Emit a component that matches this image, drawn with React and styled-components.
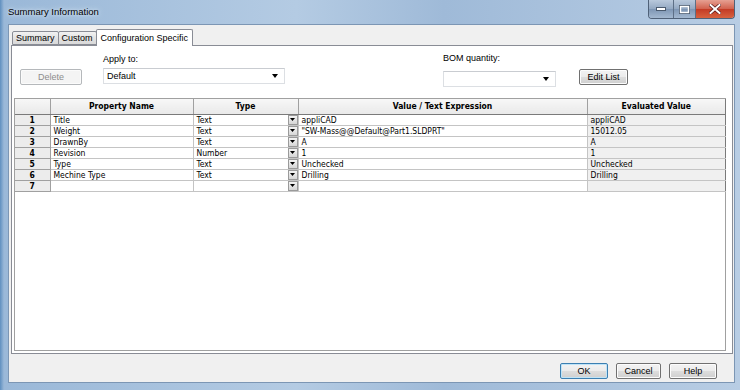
import React from "react";
import styled, { createGlobalStyle } from "styled-components";

const GlobalStyle = createGlobalStyle`
  * { box-sizing: border-box; }
  html, body { margin: 0; padding: 0; background: #ffffff; }
  body { font-family: "Liberation Sans", Arial, sans-serif; }
`;

const rows = [
  { name: "Title", type: "Text", value: "appliCAD", evaluated: "appliCAD" },
  { name: "Weight", type: "Text", value: "\"SW-Mass@@Default@Part1.SLDPRT\"", evaluated: "15012.05" },
  { name: "DrawnBy", type: "Text", value: "A", evaluated: "A" },
  { name: "Revision", type: "Number", value: "1", evaluated: "1" },
  { name: "Type", type: "Text", value: "Unchecked", evaluated: "Unchecked" },
  { name: "Mechine Type", type: "Text", value: "Drilling", evaluated: "Drilling" },
  { name: "", type: "", value: "", evaluated: "" },
];

const App = () => {
  return (
    <>
      <GlobalStyle />
      <Window>
        <TitleBar>
          <Title>Summary Information</Title>
          <CaptionGroup>
            <CaptionButton $w={25}>
              <svg width="10" height="4" viewBox="0 0 10 4">
                <rect x="0.5" y="0.5" width="9" height="3" fill="#fff" stroke="#4a5a6e" strokeWidth="1" />
              </svg>
            </CaptionButton>
            <CaptionButton $w={22}>
              <svg width="11" height="9" viewBox="0 0 11 9">
                <rect x="0.5" y="0.5" width="10" height="8" fill="none" stroke="#4a5a6e" strokeWidth="1" />
                <rect x="1.5" y="1.5" width="8" height="6" fill="none" stroke="#fff" strokeWidth="1.4" />
              </svg>
            </CaptionButton>
            <CloseButton>
              <svg width="12" height="10" viewBox="0 0 12 10">
                <path d="M1.5 1 L10.5 9 M10.5 1 L1.5 9" stroke="#5a1d1d" strokeWidth="3.4" strokeLinecap="square" />
                <path d="M1.5 1 L10.5 9 M10.5 1 L1.5 9" stroke="#fff" strokeWidth="2" strokeLinecap="square" />
              </svg>
            </CloseButton>
          </CaptionGroup>
        </TitleBar>

        <Client>
          <TabStrip>
            <Tab>Summary</Tab>
            <Tab>Custom</Tab>
            <Tab $active>Configuration Specific</Tab>
          </TabStrip>

          <Panel>
            <Controls>
              <DialogButton $w={62} $top={23} disabled>Delete</DialogButton>
              <Field $left={21} $top={7} $gap={3}>
                <Label>Apply to:</Label>
                <Combo $w={182}>
                  <span>Default</span>
                  <Arrow />
                </Combo>
              </Field>
              <Field $left={158} $top={6} $gap={7}>
                <Label>BOM quantity:</Label>
                <Combo $w={113}>
                  <span></span>
                  <Arrow />
                </Combo>
              </Field>
              <DialogButton $w={49} $top={23} $left={23}>Edit List</DialogButton>
            </Controls>

            <GridBox>
              <Table>
                <colgroup>
                  <col style={{ width: 35 }} />
                  <col style={{ width: 143 }} />
                  <col style={{ width: 105 }} />
                  <col style={{ width: 289 }} />
                  <col />
                </colgroup>
                <thead>
                  <tr>
                    <HeadCell />
                    <HeadCell>Property Name</HeadCell>
                    <HeadCell>Type</HeadCell>
                    <HeadCell>Value / Text Expression</HeadCell>
                    <HeadCell>Evaluated Value</HeadCell>
                  </tr>
                </thead>
                <tbody>
                  {rows.map((r, i) => (
                    <tr key={i}>
                      <RowHead>{i + 1}</RowHead>
                      <Cell>{r.name}</Cell>
                      <TypeCell>
                        <TypeInner>
                          <span>{r.type}</span>
                          <DropButton>
                            <svg width="5" height="3" viewBox="0 0 5 3">
                              <path d="M0 0 H5 L2.5 3 Z" fill="#000" />
                            </svg>
                          </DropButton>
                        </TypeInner>
                      </TypeCell>
                      <Cell>{r.value}</Cell>
                      <Cell $readonly>{r.evaluated}</Cell>
                    </tr>
                  ))}
                </tbody>
              </Table>
            </GridBox>
          </Panel>

          <Footer>
            <DialogButton $w={48} $default>OK</DialogButton>
            <DialogButton $w={45}>Cancel</DialogButton>
            <DialogButton $w={48}>Help</DialogButton>
          </Footer>
        </Client>
      </Window>
    </>
  );
};

export default App;

const Window = styled.div`
  width: 740px;
  height: 390px;
  display: flex;
  flex-direction: column;
  background: linear-gradient(90deg, #5f8fbf 0px, #9ab8d8 4px, #b4cbe3 40%, #9fbad8 60%, #b8cde4 100%);
  padding: 0 5px 7px 8px;
`;

const TitleBar = styled.div`
  height: 24px;
  display: flex;
  align-items: flex-start;
  margin-right: -5px;
`;

const Title = styled.div`
  font-size: 9.5px;
  color: #000;
  padding-top: 6px;
  text-shadow: 0 0 6px #dbe7f3, 0 0 3px #dbe7f3;
`;

const CaptionGroup = styled.div`
  margin-left: auto;
  margin-right: 5px;
  display: flex;
  height: 19px;
  border: 1px solid #4f6178;
  border-top: none;
  border-radius: 0 0 4px 4px;
  overflow: hidden;
`;

const CaptionButton = styled.div`
  width: ${(p) => p.$w}px;
  height: 100%;
  display: flex;
  align-items: center;
  justify-content: center;
  background: linear-gradient(#b9c9dc, #93a8c2 50%, #7e96b4 51%, #a3b8d0);
  border-right: 1px solid #5d6f86;
`;

const CloseButton = styled.div`
  width: 38px;
  height: 100%;
  display: flex;
  align-items: center;
  justify-content: center;
  background: linear-gradient(#e6a092, #d1604c 50%, #c33b25 51%, #d8623f);
`;

const Client = styled.div`
  flex: 1;
  display: flex;
  flex-direction: column;
  background: #f0f0f0;
  border: 1px solid #7c96b4;
`;

const TabStrip = styled.div`
  display: flex;
  align-items: flex-end;
  height: 20px;
  padding-left: 3px;
  position: relative;
  z-index: 1;
`;

const Tab = styled.div`
  height: ${(p) => (p.$active ? 17 : 14)}px;
  margin-bottom: ${(p) => (p.$active ? -1 : 0)}px;
  padding: 0 ${(p) => (p.$active ? 4 : 3)}px;
  display: flex;
  align-items: center;
  font-size: 9px;
  color: #000;
  border: 1px solid #898c95;
  border-bottom: ${(p) => (p.$active ? "none" : "1px solid #898c95")};
  margin-right: -1px;
  background: ${(p) => (p.$active ? "#ffffff" : "linear-gradient(#f2f2f2, #e3e3e3 50%, #d9d9d9)")};
  border-radius: 2px 2px 0 0;
`;

const Panel = styled.div`
  height: 309px;
  margin: 0 1px 0 2px;
  background: #ffffff;
  border: 1px solid #898c95;
  padding: 0 6px 0 2px;
  display: flex;
  flex-direction: column;
`;

const Controls = styled.div`
  height: 52px;
  display: flex;
  align-items: flex-start;
  padding-left: 6px;
`;

const Field = styled.div`
  display: flex;
  flex-direction: column;
  gap: ${(p) => p.$gap}px;
  margin-left: ${(p) => p.$left}px;
  margin-top: ${(p) => p.$top}px;
`;

const Label = styled.div`
  font-size: 9px;
  line-height: 12px;
  color: #000;
`;

const Combo = styled.div`
  width: ${(p) => p.$w}px;
  height: 16px;
  border: 1px solid #dcdfe3;
  border-top-color: #c9ccd1;
  background: #fff;
  display: flex;
  align-items: center;
  justify-content: space-between;
  padding: 0 6px 0 3px;
  font-size: 9px;
  color: #000;
`;

const Arrow = styled.span`
  width: 0;
  height: 0;
  border-left: 3.5px solid transparent;
  border-right: 3.5px solid transparent;
  border-top: 4px solid #000;
`;

const DialogButton = styled.button`
  width: ${(p) => p.$w}px;
  height: 16px;
  margin-top: ${(p) => p.$top || 0}px;
  margin-left: ${(p) => p.$left || 0}px;
  padding: 0;
  font-family: "Liberation Sans", Arial, sans-serif;
  font-size: 9px;
  color: #000;
  border: 1px solid ${(p) => (p.$default ? "#3c7fb1" : "#707070")};
  border-radius: 2px;
  background: linear-gradient(#f3f3f3, #ebebeb 50%, #dddddd 51%, #cfcfcf);
  box-shadow: inset 0 0 0 1px ${(p) => (p.$default ? "#bfe4f8" : "#fcfcfc")};

  &:disabled {
    color: #8d8d8d;
    border-color: #b5b8bb;
    background: #f4f4f4;
    box-shadow: inset 0 0 0 1px #fbfbfb;
  }
`;

const GridBox = styled.div`
  height: 253px;
  border: 1px solid #a0a0a0;
  background: #ffffff;
`;

const Table = styled.table`
  width: 711px;
  table-layout: fixed;
  border-collapse: collapse;
  font-family: "DejaVu Sans Condensed", "DejaVu Sans", sans-serif;
  font-size: 8.5px;
  color: #000;

  tr { height: 11px; }
  thead tr { height: 15px; }
`;

const HeadCell = styled.th`
  padding: 0;
  font-weight: bold;
  text-align: center;
  background: linear-gradient(#f7f7f7, #e9e9e9);
  border: 1px solid #a0a0a0;
  border-top: none;
  border-bottom: 1px solid #7a7a7a;
  line-height: 13px;
  white-space: nowrap;
  overflow: hidden;

  &:first-child { border-left: none; }
  &:last-child { border-right: 1px solid #7a7a7a; }
`;

const RowHead = styled.td`
  padding: 0;
  text-align: center;
  font-weight: bold;
  background: #ececec;
  border: 1px solid #a0a0a0;
  border-left: none;
  line-height: 10px;
`;

const Cell = styled.td`
  padding: 0 3px;
  border: 1px solid #c4c4c4;
  background: ${(p) => (p.$readonly ? "#f0f0f0" : "#ffffff")};
  line-height: 10px;
  white-space: nowrap;
  overflow: hidden;

  &:last-child { border-right: 1px solid #7a7a7a; }
`;

const TypeCell = styled.td`
  padding: 0 0 0 3px;
  border: 1px solid #c4c4c4;
  line-height: 10px;
`;

const TypeInner = styled.div`
  display: flex;
  align-items: center;
  justify-content: space-between;
  height: 10px;
`;

const DropButton = styled.span`
  width: 10px;
  height: 10px;
  display: flex;
  align-items: center;
  justify-content: center;
  background: linear-gradient(#f4f4f4, #d6d6d6);
  border: 1px solid #9a9a9a;
`;

const Footer = styled.div`
  flex: 1;
  display: flex;
  justify-content: flex-end;
  align-items: flex-start;
  gap: 8px;
  padding: 9px 17px 0 0;
`;
